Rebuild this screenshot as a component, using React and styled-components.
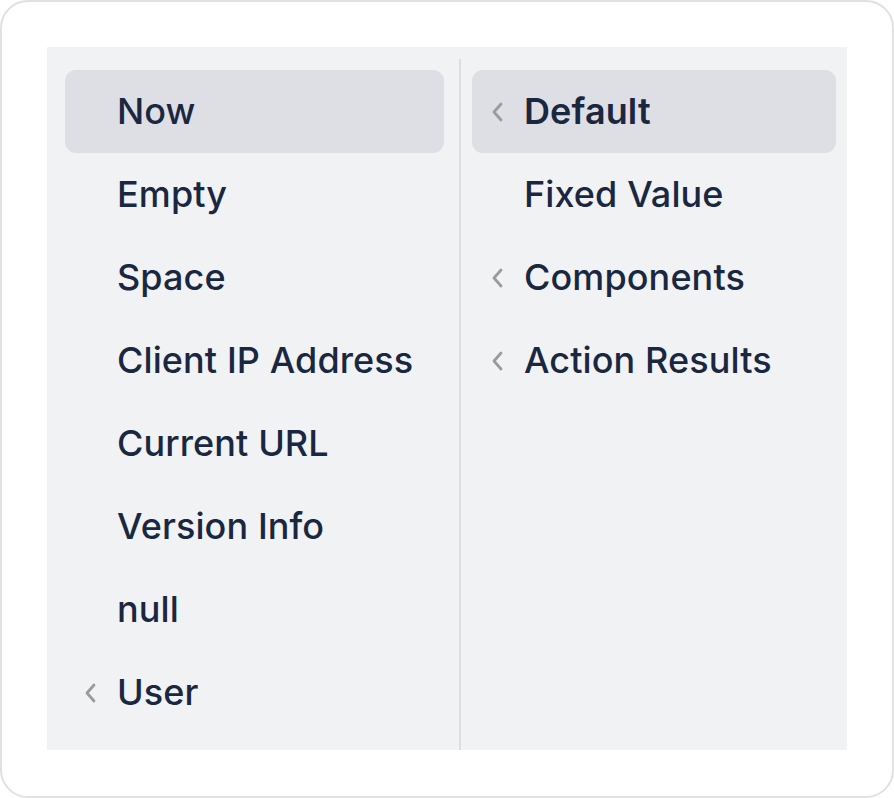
import styled, { createGlobalStyle } from 'styled-components'

const Global = createGlobalStyle`
  html, body {
    margin: 0;
    padding: 0;
    background: #ffffff;
  }
  body {
    font-family: Inter, "Noto Sans", sans-serif;
  }
`

const leftItems = [
  { label: 'Now', active: true },
  { label: 'Empty' },
  { label: 'Space' },
  { label: 'Client IP Address' },
  { label: 'Current URL' },
  { label: 'Version Info' },
  { label: 'null' },
  { label: 'User', sub: true },
]

const rightItems = [
  { label: 'Default', active: true, sub: true },
  { label: 'Fixed Value' },
  { label: 'Components', sub: true },
  { label: 'Action Results', sub: true },
]

function Chevron() {
  return (
    <svg width="14" height="22" viewBox="0 0 14 22" fill="none">
      <path d="M11 3 L4 11 L11 19" stroke="#9a9b9f" strokeWidth="2.8" strokeLinecap="round" strokeLinejoin="round" />
    </svg>
  )
}

export default function App() {
  return (
    <>
      <Global />
      <Card>
        <Panel>
          <Column $side="left">
            {leftItems.map((item) => (
              <Item key={item.label} $active={item.active}>
                <Arrow>{item.sub && <Chevron />}</Arrow>
                <Label $active={item.active && item.sub}>{item.label}</Label>
              </Item>
            ))}
          </Column>
          <Column $side="right">
            {rightItems.map((item) => (
              <Item key={item.label} $active={item.active}>
                <Arrow>{item.sub && <Chevron />}</Arrow>
                <Label $active={item.active && item.sub}>{item.label}</Label>
              </Item>
            ))}
          </Column>
        </Panel>
      </Card>
    </>
  )
}

const Card = styled.div`
  box-sizing: border-box;
  width: 894px;
  height: 798px;
  border: 2px solid #dfe1e5;
  border-radius: 28px;
  background: #ffffff;
  padding: 45px 45px 46px 45px;
`

const Panel = styled.div`
  display: grid;
  grid-template-columns: 414px 1fr;
  height: 100%;
  background: #f1f2f4;
`

const Column = styled.div`
  display: flex;
  flex-direction: column;
  margin-top: 12px;
  padding: 11px ${(p) => (p.$side === 'left' ? '15px 0 18px' : '11px 0 11px')};
  border-right: ${(p) => (p.$side === 'left' ? '2px solid #dcdee2' : 'none')};
`

const Item = styled.div`
  display: flex;
  align-items: center;
  height: 83px;
  flex-shrink: 0;
  border-radius: 11px;
  background: ${(p) => (p.$active ? '#dedfe4' : 'transparent')};
`

const Arrow = styled.span`
  display: flex;
  align-items: center;
  justify-content: center;
  width: 52px;
  padding-right: 3px;
  box-sizing: border-box;
`

const Label = styled.span`
  font-size: 36px;
  line-height: 44px;
  padding-bottom: 2px;
  font-weight: ${(p) => (p.$active ? 600 : 500)};
  color: #1a2741;
  letter-spacing: 0.1px;
`
